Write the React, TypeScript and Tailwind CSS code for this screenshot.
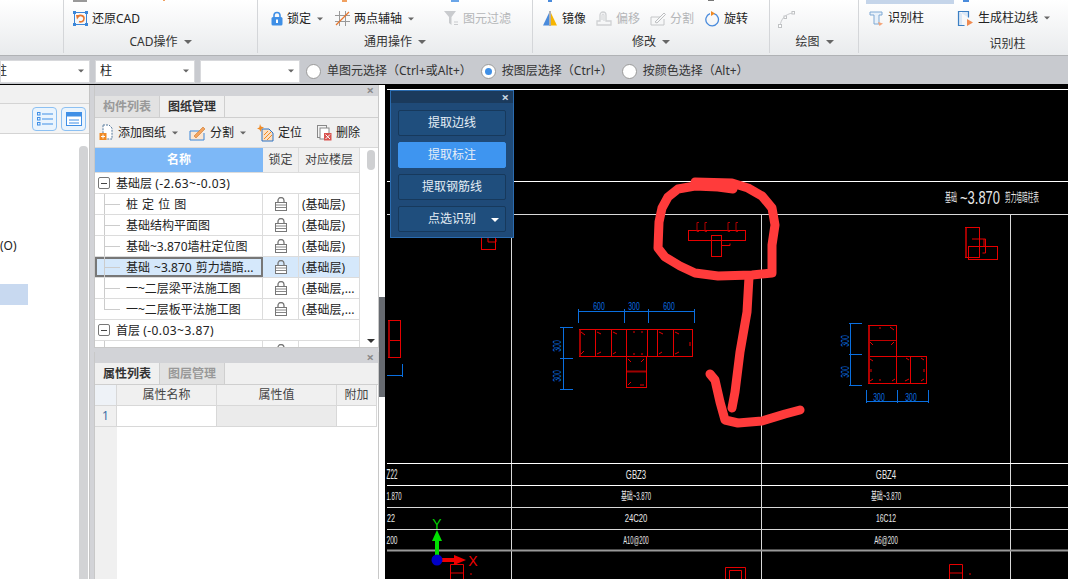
import type { ReactNode } from 'react';

const Caret = ({ className = '' }: { className?: string }) => (
  <span className={`inline-block w-0 h-0 border-x-[4px] border-x-transparent border-t-[4px] border-t-[#666] ${className}`} />
);

const ico = 'shrink-0';

const RestoreIcon = () => (
  <svg width="15" height="15" viewBox="0 0 15 15" className={ico}>
    <rect x="1.500" y="1.500" width="12" height="12" fill="none" stroke="#3b86d8" />
    <path d="M0 0h3v3H0zM12 0h3v3h-3zM0 12h3v3H0zM12 12h3v3h-3z" fill="#3b86d8" />
    <path d="M5 5.500C7 3.500 11 4.500 11 7.500S8 11.500 6 10.500" fill="none" stroke="#e8772e" strokeWidth="1.600" />
    <path d="M3 4h4.500L4 8.500z" fill="#e8772e" />
  </svg>
);
const LockBlue = () => (
  <svg width="12" height="15" viewBox="0 0 12 15" className={ico}>
    <path d="M3 7V4.500a3 3 0 0 1 6 0V7" fill="none" stroke="#3f8fe6" strokeWidth="1.600" />
    <rect x="0.500" y="6" width="11" height="8.500" rx="1.500" fill="#3f8fe6" />
    <rect x="5" y="8.500" width="2" height="3.500" fill="#fff" />
  </svg>
);
const AxisIcon = () => (
  <svg width="15" height="15" viewBox="0 0 15 15" className={ico}>
    <path d="M0 4.500h15M0 10.500h15M4.500 0v15M10.500 0v15" stroke="#999" />
    <path d="M1 14L14 1" stroke="#e8772e" strokeWidth="1.200" />
  </svg>
);
const FilterIcon = () => (
  <svg width="15" height="15" viewBox="0 0 15 15" className={ico}>
    <path d="M0 0h12L7.500 6v8L5 12V6z" fill="#c9cbce" />
    <path d="M10 11h4M10 13.500h4" stroke="#c9cbce" />
  </svg>
);
const MirrorIcon = () => (
  <svg width="16" height="15" viewBox="0 0 16 15" className={ico}>
    <path d="M7 2v12.500H1z" fill="#4a8bdc" />
    <path d="M9 2v12.500h6z" fill="#f7b500" />
    <path d="M8 0v15" stroke="#666" />
  </svg>
);
const OffsetIcon = () => (
  <svg width="16" height="15" viewBox="0 0 16 15" className={ico}>
    <path d="M1 14v-4h3V4a3 3 0 0 1 6 0v6h5v4z" fill="none" stroke="#cfd1d3" strokeWidth="1.300" />
    <path d="M6 9V4a1 1 0 0 1 2 0v6" fill="none" stroke="#cfd1d3" />
  </svg>
);
const SplitIcon = () => (
  <svg width="16" height="15" viewBox="0 0 16 15" className={ico}>
    <path d="M1 6h9M1 6v8h13V8" fill="none" stroke="#c4c6c8" />
    <path d="M5 11L14 2l1.500 1.500L7 12z" fill="none" stroke="#bcbec0" />
  </svg>
);
const RotateIcon = () => (
  <svg width="15" height="16" viewBox="0 0 15 16" className={ico}>
    <path d="M9 2.600a6.300 6.300 0 1 1-4 .1" fill="none" stroke="#4a8bdc" strokeWidth="1.300" />
    <path d="M6 0l4 2.500L6 5z" fill="#f08a24" />
  </svg>
);
const CurveIcon = () => (
  <svg width="17" height="17" viewBox="0 0 17 17">
    <path d="M2 15C3 8 7 3 15 2" fill="none" stroke="#c9cbce" />
    <rect x="0.500" y="13.500" width="3" height="3" fill="#fff" stroke="#c0c2c4" />
    <rect x="6" y="5" width="2.500" height="2.500" fill="#fff" stroke="#c0c2c4" />
    <rect x="14" y="0.500" width="2.500" height="2.500" fill="#fff" stroke="#c0c2c4" />
  </svg>
);
const ColumnIcon = () => (
  <svg width="15" height="15" viewBox="0 0 15 15" className={ico}>
    <path d="M1 1h12v3h-3v9H5V4H1z" fill="#e8f1fa" stroke="#7fa9d4" />
    <path d="M9 11l5 1.500-3.500 2.500z" fill="#f4a57a" />
  </svg>
);
const EdgeIcon = () => (
  <svg width="17" height="17" viewBox="0 0 17 17" className={ico}>
    <path d="M5 1.500H1.500v14H5M1.500 1.500h10v6M1.500 15.500h6" fill="#dbe8f6" stroke="#3b7fc4" strokeWidth="1.200" />
    <path d="M10 9l6 3.500-6 3.500z" fill="#f08a50" />
  </svg>
);
const AddDocIcon = () => (
  <svg width="15" height="17" viewBox="0 0 15 17" className={ico}>
    <path d="M4 1h6l3 3v11H4z" fill="#fff" stroke="#55789c" strokeDasharray="2 1" />
    <rect x="0.500" y="9" width="7" height="7" fill="#f08a24" />
    <path d="M4 10.500v4M2 12.500h4" stroke="#fff" />
  </svg>
);
const SplitBlueIcon = () => (
  <svg width="17" height="16" viewBox="0 0 17 16" className={ico}>
    <path d="M1 6h11M1 6v9h14V8" fill="#fbe6d2" stroke="#3b86d8" />
    <path d="M5 11L14 2l2 2-9 9z" fill="#f3a35e" stroke="#c9772e" strokeWidth="0.600" />
  </svg>
);
const LocateIcon = () => (
  <svg width="17" height="18" viewBox="0 0 17 18" className={ico}>
    <path d="M5 5h7l4 4v8H5z" fill="#fbe0c4" stroke="#2d73c4" />
    <path d="M7 15l7-7M7 11l4-4M10 16l5-5" stroke="#f08a24" />
    <path d="M3 0l1 2.500L7 3.500 4.500 5 4 8 2.500 5.500 0 4.500l2.300-1z" fill="#f08a24" />
  </svg>
);
const DeleteIcon = () => (
  <svg width="15" height="16" viewBox="0 0 15 16" className={ico}>
    <rect x="0.500" y="0.500" width="9" height="12" fill="#f4f4f4" stroke="#888" />
    <rect x="3" y="3" width="9" height="11" fill="#fff" stroke="#888" />
    <rect x="7" y="8" width="7.500" height="7.500" fill="#d9534f" />
    <path d="M8.500 9.500l4.500 4.500M13 9.500l-4.500 4.500" stroke="#fff" />
  </svg>
);
const ListIcon = () => (
  <svg width="16" height="14" viewBox="0 0 16 14">
    <path d="M5 2h11M5 7h11M5 12h11" stroke="#3f8fe6" />
    <rect x="0.500" y="0.500" width="2.500" height="2.500" fill="none" stroke="#3f8fe6" />
    <rect x="0.500" y="5.500" width="2.500" height="2.500" fill="none" stroke="#3f8fe6" />
    <rect x="0.500" y="10.500" width="2.500" height="2.500" fill="none" stroke="#3f8fe6" />
  </svg>
);
const FormIcon = () => (
  <svg width="16" height="14" viewBox="0 0 16 14">
    <rect x="0.500" y="0.500" width="15" height="13" fill="#fff" stroke="#3f8fe6" />
    <rect x="0.500" y="0.500" width="15" height="4" fill="#3f8fe6" />
    <path d="M3 8h10M3 11h10" stroke="#3f8fe6" />
  </svg>
);
const GrayLock = () => (
  <svg width="12" height="14" viewBox="0 0 12 14">
    <path d="M3 6V3.500a3 3 0 0 1 6 0V6" fill="none" stroke="#777" strokeWidth="1.300" />
    <rect x="0.500" y="5.500" width="11" height="8" fill="#fff" stroke="#777" />
    <path d="M1 8h10M1 10.500h10" stroke="#888" />
  </svg>
);

const RibbonItem = ({ icon, label, muted, caret, className = '' }: { icon: ReactNode; label: string; muted?: boolean; caret?: boolean; className?: string }) => (
  <div className={`flex items-center gap-[4px] ${className}`}>
    {icon}
    <span className={muted ? 'text-[#b4b6b8]' : 'text-[#222]'}>{label}</span>
    {caret && <Caret className="ml-[1px] scale-75" />}
  </div>
);

const RibbonGroup = ({ width, title, caret = true, titleClass = '', children }: { width: string; title: string; caret?: boolean; titleClass?: string; children: ReactNode }) => (
  <div className={`${width} h-[53px] shrink-0 flex flex-col border-r border-[#d4d6d9]`}>
    <div className="h-[35px] pt-[11px] flex items-start">{children}</div>
    <div className={`flex items-center justify-center gap-[6px] h-[14px] text-[#333] ${titleClass}`}>
      {title}
      {caret && <Caret />}
    </div>
  </div>
);

const Select = ({ width, value, prefixClass = 'pl-[4px]' }: { width: string; value: string; prefixClass?: string }) => (
  <div className={`${width} h-[23px] overflow-hidden bg-white border border-[#d8d9dc] flex items-center justify-between pr-[4px] ${prefixClass}`}>
    <span className="text-[#222]">{value}</span>
    <Caret className="scale-75" />
  </div>
);

const Radio = ({ checked, label, className = '' }: { checked?: boolean; label: string; className?: string }) => (
  <div className={`flex items-center gap-[6px] text-[#333] ${className}`}>
    <span className="w-[15px] h-[15px] rounded-full bg-white border border-[#9a9a9a] flex items-center justify-center">
      {checked && <span className="w-[7px] h-[7px] rounded-full bg-[#3f8fe6]" />}
    </span>
    {label}
  </div>
);

const CloseX = () => <span className="text-[#8a8a8a] text-[13px] font-bold leading-none">×</span>;

const sheets = [
  { name: '桩 定 位 图', floor: '(基础层)' },
  { name: '基础结构平面图', floor: '(基础层)' },
  { name: '基础~3.870墙柱定位图', floor: '(基础层)' },
  { name: '基础 ~3.870 剪力墙暗...', floor: '(基础层)', selected: true },
  { name: '一~二层梁平法施工图', floor: '(基础层,...' },
  { name: '一~二层板平法施工图', floor: '(基础层,...', last: true },
];

const GroupRow = ({ label, range }: { label: string; range: string }) => (
  <div className="h-[21px] flex items-center border-b border-[#dcdcdc] bg-white pl-[3px] gap-[6px] text-[#222]">
    <span className="w-[12px] h-[12px] border border-[#777] rounded-[2px] flex items-center justify-center">
      <span className="w-[6px] h-px bg-[#444]" />
    </span>
    <span className="pt-px whitespace-nowrap">
      {label} <span className="tracking-[0.45px]">{range}</span>
    </span>
  </div>
);

const SheetRow = ({ name, floor, selected, last }: { name: string; floor: string; selected?: boolean; last?: boolean }) => (
  <div className={`h-[21px] grid grid-cols-[168px_36px_60px] border-b border-[#dcdcdc] ${selected ? 'bg-[#d5e8fb]' : 'bg-white'}`}>
    <div className={`relative flex items-center pl-[31px] pt-px border-r border-[#dcdcdc] text-[#222] whitespace-nowrap [word-spacing:1px] ${selected ? 'outline-2 -outline-offset-2 outline-[#777]' : ''}`}>
      <span className={`absolute left-[9px] top-0 w-px bg-[#ccc] ${last ? 'h-[11px]' : 'h-full'}`} />
      <span className="absolute left-[9px] top-[10px] w-[16px] h-px bg-[#ccc]" />
      {name}
    </div>
    <div className="flex items-center justify-center border-r border-[#dcdcdc]"><GrayLock /></div>
    <div className="flex items-center pl-[3px] pt-px text-[#222] whitespace-nowrap">{floor}</div>
  </div>
);

const PanelHead = () => (
  <div className="h-[11px] bg-[#d2d3d7] flex items-center justify-end pr-[4px] shrink-0"><CloseX /></div>
);

const Tab = ({ label, active }: { label: string; active?: boolean }) => (
  <div className={`w-[65px] flex items-center justify-center border-r border-[#cfcfcf] font-bold ${active ? 'bg-[#f0f0f0] text-[#333]' : 'bg-[#e2e2e2] text-[#999]'}`}>{label}</div>
);

// 图纸全部用页面坐标，viewBox 从画布左上角开始
const red = '#e60000';
const blue = '#0a6fe0';
const line = '#d8d8d8';

const Dim = ({ x, y, text, rotate }: { x: number; y: number; text: string; rotate?: boolean }) => (
  <text fill={blue} fontSize="11" textAnchor="middle" fontFamily="'Liberation Sans', sans-serif" transform={`translate(${x} ${y}) ${rotate ? 'rotate(-90)' : ''} scale(0.62 1)`}>{text}</text>
);

const CadText = ({ x, y, sx, size = 11, children }: { x: number; y: number; sx: number; size?: number; children: string }) => (
  <text fill="#e8e8e8" fontSize={size} textAnchor="middle" fontFamily="'Liberation Sans', 'Noto Sans CJK SC', sans-serif" transform={`translate(${x} ${y}) scale(${sx} 1)`}>{children}</text>
);

const Drawing = () => (
  <svg viewBox="385 85 683 494" width="683" height="494" className="block">
    {/* 表格线 */}
    <g stroke={line} fill="none">
      <path d="M387 89.500H1068M387 181.500H1068" stroke="#fff" />
      <path d="M387 214.500H1068" />
      <path d="M511.500 214V579M761.500 214V579M1010.500 214V579" />
      <path d="M387 463.500H1068M387 485.500H1068" stroke="#fff" />
      <path d="M387 507.500H1068M387 529.500H1068" />
      <path d="M387 550.500H1068" stroke="#999" strokeWidth="2" />
    </g>

    <CadText x={951} y={202} sx={0.5} size={12}>基础</CadText>
    <CadText x={980} y={204} sx={0.72} size={18}>~3.870</CadText>
    <CadText x={1022} y={202} sx={0.47} size={12}>剪力墙暗柱表</CadText>

    <CadText x={392} y={479} sx={0.45} size={14}>Z22</CadText>
    <CadText x={636} y={479} sx={0.6} size={13}>GBZ3</CadText>
    <CadText x={886} y={479} sx={0.6} size={13}>GBZ4</CadText>
    <CadText x={394} y={500} sx={0.55}>1.870</CadText>
    <CadText x={636} y={500} sx={0.54}>基础~3.870</CadText>
    <CadText x={886} y={500} sx={0.54}>基础~3.870</CadText>
    <CadText x={391} y={522} sx={0.65}>22</CadText>
    <CadText x={636} y={522} sx={0.7}>24C20</CadText>
    <CadText x={886} y={522} sx={0.62}>16C12</CadText>
    <CadText x={392} y={544} sx={0.6}>200</CadText>
    <CadText x={636} y={544} sx={0.52}>A10@200</CadText>
    <CadText x={886} y={544} sx={0.55}>A6@200</CadText>

    {/* 圈内的柱 */}
    <g stroke={red} fill="none">
      <rect x="688.500" y="230.500" width="57" height="10" />
      <rect x="711.500" y="235.500" width="10" height="21" />
      <path d="M721 245.500h9v-2" />
      <path d="M699 222.500h-2v9h2M707 222.500h-2v9h2M730 222.500h-2v9h2M738 222.500h-2v9h2" stroke="#b00000" />
    </g>

    {/* 一字+T 柱 */}
    <g stroke={red} fill="none">
      <rect x="579.500" y="329.500" width="113" height="27" />
      <path d="M595.500 329V356M611.500 329V356M626.500 329V356M647.500 329V356M657.500 329V356M673.500 329V356" />
      <rect x="626.500" y="356.500" width="20" height="31" />
      <path d="M627 371.500h19" stroke="#a00000" strokeWidth="2" />
      <path d="M580 330v26" stroke="#a00000" strokeWidth="2" />
      <path d="M581 332l4 3M597 332l4 2M613 332l4 2M659 332l4 2M675 332l4 2M581 354l3-3M597 354l4-2M613 354l3-2M659 354l3-2M675 354l4-2M628 359l3 3M644 359l-3 3M628 385l3-3M644 385h-4M633 332h2M641 332h2M633 354h2M641 354h2M690 342v4" />
    </g>
    <g stroke={blue} fill="none">
      <path d="M578 311.500H695M578.500 309V323M624.500 309V323M648.500 309V323M694.500 309V323" />
      <path d="M563.500 327V389M560 327.500H573M560 358.500H573M560 389.500H573" />
    </g>
    <Dim x={599} y={310} text="600" />
    <Dim x={634} y={310} text="300" />
    <Dim x={669} y={310} text="600" />
    <Dim x={561} y={346} text="300" rotate />
    <Dim x={561} y={376} text="300" rotate />

    {/* 左边的小柱 */}
    <g stroke={red} fill="none">
      <rect x="388.500" y="320.500" width="12" height="37" />
      <path d="M388 340.500h13" />
      <path d="M389 321v36" stroke="#a00000" strokeWidth="2" />
    </g>
    <path d="M402.500 364V377M387 375.500H403" stroke={blue} fill="none" />

    <g stroke={red} fill="none">
      <rect x="481.500" y="237.500" width="14" height="12" />
      <path d="M488 238v4h8v-3" />
    </g>

    {/* L 柱 */}
    <g stroke={red} fill="none">
      <rect x="868.500" y="325.500" width="28" height="31" />
      <path d="M868 340.500H896" stroke="#c00000" />
      <rect x="868.500" y="356.500" width="58" height="27" />
      <path d="M896.500 356V383M910.500 356V383" />
      <path d="M869 326v57" stroke="#b00000" strokeWidth="2" />
      <path d="M890 327l4 3M870 342l3 3M894 342l-3 3M870 359l3 2M906 358l3 2M921 358l3 2M870 381l3-2M892 381l3-2M905 381l4-2M921 381l3-2M880 327v2M880 381v-2M924 369v3M871 369v3" />
    </g>
    <g stroke={blue} fill="none">
      <path d="M850.500 323V385M849 323.500H862M849 354.500H862M849 385.500H862" />
      <path d="M866 401.500H929M866.500 390V403M897.500 390V403M928.500 390V403" />
    </g>
    <Dim x={849} y={341} text="300" rotate />
    <Dim x={849} y={372} text="300" rotate />
    <Dim x={879} y={401} text="300" />
    <Dim x={911} y={401} text="300" />

    {/* 右上小柱 */}
    <g stroke={red} fill="none">
      <rect x="965.500" y="227.500" width="14" height="30" />
      <rect x="968.500" y="246.500" width="29" height="13" />
      <path d="M972 239h12v7M984 239h1.500v14h-3" />
      <path d="M966 228v29" stroke="#a00000" strokeWidth="2" />
    </g>

    {/* 底部被切掉的柱 */}
    <g stroke={red} fill="none">
      <path d="M450.500 579V564.500H463.500V579M450 573h14M470 574h2" />
      <path d="M725.500 579V567.500H745.500V579M729.500 579V570.500H741.500V579" />
      <path d="M949.500 579V564.500H962.500V579M949 573h14M969 574h2" />
    </g>

    {/* 手画的红圈 */}
    <g fill="none" stroke="#ff3b3b" strokeWidth="9" strokeLinecap="round" strokeLinejoin="round">
      <path d="M733 189L718 187L695 186L678 189L668 197L662 208L659 222L658 248L665 257L680 266L695 273L718 276L752 275L772 273L772 245L775 225L772 208L762 196L748 188L732 183L695 182" />
      <path d="M749 277L747 312L740 352L735 392L732 408" />
      <path d="M710 374L715 380L720 402L725 420L738 423L762 421L785 414L800 410" />
    </g>

    {/* 坐标轴 */}
    <path d="M437 558V537" stroke="#00e000" strokeWidth="4" />
    <path d="M437 530l5 11h-10z" fill="#00e000" />
    <path d="M440 560H456" stroke="#f00000" strokeWidth="4" />
    <path d="M466 560l-12-5v10z" fill="#f00000" />
    <circle cx="437" cy="560" r="5.500" fill="#0000c8" />
    <text x="437" y="529" fill="#00d000" fontSize="14" textAnchor="middle" fontFamily="'Liberation Sans', sans-serif">Y</text>
    <text x="473" y="566" fill="#f00000" fontSize="14" textAnchor="middle" fontFamily="'Liberation Sans', sans-serif">X</text>
  </svg>
);

const FloatButton = ({ label, active, caret }: { label: string; active?: boolean; caret?: boolean }) => (
  <div className={`relative h-[26px] rounded-[2px] flex items-center justify-center border text-[#e6eef6] ${active ? 'bg-[#3e95f0] border-[#3e95f0]' : 'bg-[#1f4e7d] border-[#17395c]'}`}>
    {label}
    {caret && <span className="absolute right-[6px] top-[11px] w-0 h-0 border-x-[4px] border-x-transparent border-t-[4px] border-t-white" />}
  </div>
);

export default function App() {
  return (
    <div className="w-[1068px] h-[579px] overflow-hidden flex flex-col bg-white text-[12px] leading-[14px] font-['Noto_Sans','Noto_Sans_CJK_SC',sans-serif]">
      {/* ribbon */}
      <div className="relative h-[56px] shrink-0 flex bg-gradient-to-b from-white to-[#e9ebed] border-b border-[#b0b2b5]">
        {/* 被上一排裁掉的图标残余 */}
        <span className="absolute left-[73px] top-0 w-[14px] h-[2px] bg-[#999]" />
        <span className="absolute left-[163px] top-0 w-[2px] h-[1px] bg-[#f0a060]" />
        <span className="absolute left-[342px] top-0 w-[5px] h-[2px] bg-[#f0a060]" />
        <span className="absolute left-[451px] top-0 w-[8px] h-[2px] bg-[#6aa5e8]" />
        <span className="absolute left-[548px] top-0 w-[4px] h-[2px] bg-[#4a8bdc]" />
        <span className="absolute left-[708px] top-0 w-[6px] h-[1px] bg-[#777]" />
        <span className="absolute left-[963px] top-0 w-[6px] h-[2px] bg-[#4a8bdc]" />
        <div className="w-[64px] h-[53px] shrink-0 border-r border-[#d4d6d9]" />
        <RibbonGroup width="w-[194px]" title="CAD操作">
          <RibbonItem icon={<RestoreIcon />} label="还原CAD" className="ml-[9px]" />
        </RibbonGroup>
        <RibbonGroup width="w-[275px]" title="通用操作">
          <RibbonItem icon={<LockBlue />} label="锁定" caret className="ml-[13px]" />
          <RibbonItem icon={<AxisIcon />} label="两点辅轴" caret className="ml-[11px]" />
          <RibbonItem icon={<FilterIcon />} label="图元过滤" muted className="ml-[29px]" />
        </RibbonGroup>
        <RibbonGroup width="w-[237px]" title="修改">
          <RibbonItem icon={<MirrorIcon />} label="镜像" className="ml-[9px]" />
          <RibbonItem icon={<OffsetIcon />} label="偏移" muted className="ml-[10px]" />
          <RibbonItem icon={<SplitIcon />} label="分割" muted className="ml-[10px]" />
          <RibbonItem icon={<RotateIcon />} label="旋转" className="ml-[11px]" />
        </RibbonGroup>
        <RibbonGroup width="w-[89px]" title="绘图" titleClass="pl-[1px]">
          <div className="ml-[8px]"><CurveIcon /></div>
        </RibbonGroup>
        <div className="flex-1 h-[53px] flex flex-col">
          <div className="h-[4px] w-[88px] ml-[7px] bg-[#c5d5ea]" />
          <div className="flex items-center h-[28px]">
            <RibbonItem icon={<ColumnIcon />} label="识别柱" className="ml-[10px]" />
            <RibbonItem icon={<EdgeIcon />} label="生成柱边线" caret className="ml-[33px]" />
          </div>
          <div className="text-center text-[#333] mt-[5px] pl-[88px]">识别柱</div>
        </div>
      </div>

      {/* 选择条 */}
      <div className="h-[29px] shrink-0 flex items-center pt-[2px] bg-[#c8cacf] border-b border-black">
        <Select width="w-[90px]" value="柱" prefixClass="pl-0 [&>span:first-child]:-ml-[6px]" />
        <Select width="w-[100px] ml-[5px]" value="柱" />
        <Select width="w-[100px] ml-[5px]" value="" />
        <Radio label="单图元选择（Ctrl+或Alt+）" className="ml-[6px]" />
        <Radio checked label="按图层选择（Ctrl+）" className="ml-[9px]" />
        <Radio label="按颜色选择（Alt+）" className="ml-[9px]" />
      </div>

      <div className="flex-1 min-h-0 flex">
        {/* 最左侧面板 */}
        <div className="w-[94px] shrink-0 flex bg-[#d2d3d7]">
          <div className="w-[90px] flex flex-col bg-white border-r border-[#c4c4c4]">
            <div className="h-[19px] shrink-0 bg-[#f1f1f1] border-b border-[#d4d4d4]" />
            <div className="h-[30px] shrink-0 bg-[#f4f4f4] border-b border-[#d4d4d4] flex items-center justify-end gap-[4px] pr-[3px]">
              <div className="w-[25px] h-[24px] rounded-[4px] border border-[#8cc0f2] bg-[#eaf4fd] flex items-center justify-center"><ListIcon /></div>
              <div className="w-[25px] h-[24px] rounded-[4px] border border-[#8cc0f2] bg-[#eaf4fd] flex items-center justify-center"><FormIcon /></div>
            </div>
            <div className="flex-1 flex">
              <div className="w-[79px] flex flex-col">
                <div className="h-[124px] flex items-end text-[#222]">
                  <span className="leading-[24px]">(O)</span>
                </div>
                <div className="h-[26px]" />
                <div className="h-[21px] w-[28px] bg-[#c8d9f0]" />
              </div>
              <div className="w-[9px] mt-[12px] rounded-t-[4px] bg-[#d2d3d5]" />
            </div>
          </div>
        </div>

        {/* 中间两个面板 */}
        <div className="w-[285px] shrink-0 flex flex-col bg-[#d2d3d7]">
          <div className="h-[263px] shrink-0 flex flex-col border-l border-r border-b border-[#c8c8c8] bg-[#f0f0f0]">
            <PanelHead />
            <div className="h-[22px] shrink-0 flex border-b border-[#cfcfcf]">
              <Tab label="构件列表" />
              <Tab label="图纸管理" active />
            </div>
            <div className="h-[30px] shrink-0 flex items-center text-[#333] pl-[4px] border-b border-[#d8d8d8]">
              <RibbonItem icon={<AddDocIcon />} label="添加图纸" caret />
              <RibbonItem icon={<SplitBlueIcon />} label="分割" caret className="ml-[10px]" />
              <RibbonItem icon={<LocateIcon />} label="定位" className="ml-[10px]" />
              <RibbonItem icon={<DeleteIcon />} label="删除" className="ml-[15px]" />
            </div>
            <div className="flex-1 min-h-0 flex">
              <div className="w-[265px] overflow-hidden border-r border-[#dcdcdc] bg-white">
                <div className="h-[25px] grid grid-cols-[168px_36px_60px] bg-[#f0f0f0] border-b border-[#dcdcdc] text-[#444]">
                  <div className="bg-[#7db8f7] text-white font-bold flex items-center justify-center">名称</div>
                  <div className="flex items-center justify-center border-r border-[#dcdcdc]">锁定</div>
                  <div className="flex items-center justify-center">对应楼层</div>
                </div>
                <GroupRow label="基础层" range="(-2.63~-0.03)" />
                {sheets.map((s) => (
                  <SheetRow key={s.name} name={s.name} floor={s.floor} selected={s.selected} last={s.last} />
                ))}
                <GroupRow label="首层" range="(-0.03~3.87)" />
                <SheetRow name="" floor="" />
              </div>
              <div className="flex-1 bg-white flex flex-col items-center justify-between py-[4px] pl-[3px]">
                <span className="w-0 h-0 border-x-[4px] border-x-transparent border-b-[4px] border-b-[#333]" />
                <div className="w-[8px] h-[20px] -mt-[175px] rounded-[4px] bg-[#cfd0d2]" />
                <span className="w-0 h-0 border-x-[4px] border-x-transparent border-t-[4px] border-t-[#333]" />
              </div>
            </div>
          </div>
          <div className="h-[4px] shrink-0" />
          <div className="flex-1 min-h-0 flex flex-col bg-white border-l border-r border-[#c8c8c8]">
            <PanelHead />
            <div className="h-[22px] shrink-0 flex bg-[#f0f0f0] border-b border-[#cfcfcf]">
              <Tab label="属性列表" active />
              <Tab label="图层管理" />
            </div>
            <div className="flex-1 relative grid grid-cols-[22px_100px_120px_40px] grid-rows-[21px_21px] content-start text-[#444] bg-[linear-gradient(to_right,#f0f0f0_22px,white_22px)]">
              <div className="bg-[#eef2f7] border-b border-r border-[#d8d8d8]" />
              <div className="bg-[#f0f0f0] border-b border-r border-[#d8d8d8] flex items-center justify-center">属性名称</div>
              <div className="bg-[#f0f0f0] border-b border-r border-[#d8d8d8] flex items-center justify-center">属性值</div>
              <div className="bg-[#f0f0f0] border-b border-r border-[#d8d8d8] flex items-center justify-center">附加</div>
              <div className="bg-[#f0f0f0] border-b border-r border-[#d8d8d8] flex items-center justify-center text-[#3a6ea5]">1</div>
              <div className="bg-white border-b border-r border-[#d8d8d8]" />
              <div className="bg-[#ebebeb] border-b border-r border-[#d8d8d8]" />
              <div className="bg-white border-b border-r border-[#d8d8d8]" />
            </div>
          </div>
        </div>

        {/* 分隔条 */}
        <div className="w-[6px] shrink-0 flex flex-col bg-white">
          <div className="h-[212px]" />
          <div className="h-[100px] bg-[#666a70]" />
        </div>

        {/* CAD 画布 */}
        <div className="relative flex-1 min-w-0 bg-black">
          <Drawing />
          <div className="absolute left-[5px] top-[5px] w-[124px] h-[148px] bg-[#1f4a78] border border-[#2b6cb0] flex flex-col">
            <div className="h-[12px] shrink-0 bg-[#1b3a5c] flex items-center justify-end pr-[4px]">
              <span className="text-[#c8d4e0] text-[13px] font-bold leading-none">×</span>
            </div>
            <div className="flex flex-col gap-[6px] px-[7px] pt-[7px]">
              <FloatButton label="提取边线" />
              <FloatButton label="提取标注" active />
              <FloatButton label="提取钢筋线" />
              <FloatButton label="点选识别" caret />
            </div>
          </div>
        </div>
      </div>
    </div>
  );
}
